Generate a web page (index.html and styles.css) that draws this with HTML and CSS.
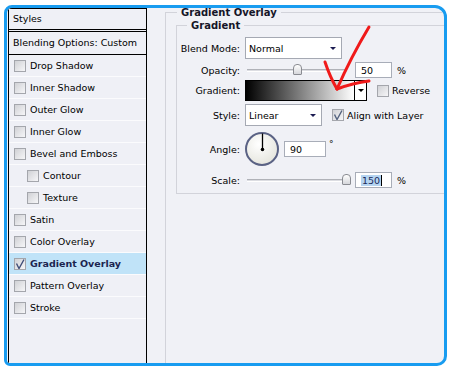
FILE: index.html
```html
<!DOCTYPE html>
<html lang="en">
<head>
  <meta charset="UTF-8">
  <meta name="viewport" content="width=device-width, initial-scale=1.0">
  <title>Layer Style</title>
  <link rel="stylesheet" href="styles.css">
</head>
<body>

  <div class="window">
    <aside class="styles-panel">
      <div class="panel-title">Styles</div>
      <div class="panel-blend">Blending Options: Custom</div>
      <ul class="style-list">
        <li><span class="check"></span>Drop Shadow</li>
        <li><span class="check"></span>Inner Shadow</li>
        <li><span class="check"></span>Outer Glow</li>
        <li><span class="check"></span>Inner Glow</li>
        <li><span class="check"></span>Bevel and Emboss</li>
        <li class="sub"><span class="check"></span>Contour</li>
        <li class="sub"><span class="check"></span>Texture</li>
        <li><span class="check"></span>Satin</li>
        <li><span class="check"></span>Color Overlay</li>
        <li class="active">
          <span class="check">
            <svg width="10" height="10" viewBox="0 0 10 10"><path d="M1.5 4.5 L4 9.5 L9 0.5" fill="none" stroke="#3f4d78" stroke-width="1.4"/></svg>
          </span>Gradient Overlay
        </li>
        <li><span class="check"></span>Pattern Overlay</li>
        <li><span class="check"></span>Stroke</li>
      </ul>
    </aside>

    <section class="options">
      <fieldset class="group outer">
        <legend>Gradient Overlay</legend>
        <fieldset class="group inner">
          <legend>Gradient</legend>

          <div class="row row-blend">
            <span class="label">Blend Mode:</span>
            <div class="select select-blend">Normal<span class="caret"></span></div>
          </div>

          <div class="row row-opacity">
            <span class="label">Opacity:</span>
            <div class="slider"><span class="thumb" style="left: calc(50% - 3px)"></span></div>
            <span class="field">50</span>
            <span class="unit">%</span>
          </div>

          <div class="row row-gradient">
            <span class="label">Gradient:</span>
            <div class="swatch">
              <span class="ramp"></span>
              <span class="swatch-drop"><span class="caret dark"></span></span>
            </div>
            <span class="check check-reverse"></span>
            <span class="check-text">Reverse</span>
          </div>

          <div class="row row-style">
            <span class="label">Style:</span>
            <div class="select select-style">Linear<span class="caret"></span></div>
            <span class="check check-align">
              <svg width="10" height="10" viewBox="0 0 10 10"><path d="M1.5 4.5 L4 9.5 L9 0.5" fill="none" stroke="#53627f" stroke-width="1.4"/></svg>
            </span>
            <span class="check-text">Align with Layer</span>
          </div>

          <div class="row row-angle">
            <span class="label">Angle:</span>
            <svg class="dial" width="34" height="34" viewBox="0 0 34 34">
              <defs>
                <radialGradient id="dialFill" cx="40%" cy="35%" r="70%">
                  <stop offset="0" stop-color="#ffffff"/>
                  <stop offset="1" stop-color="#e4e4dc"/>
                </radialGradient>
              </defs>
              <circle cx="17" cy="17" r="16" fill="url(#dialFill)" stroke="#5a6284" stroke-width="2"/>
              <line x1="17.5" y1="17" x2="17.5" y2="1.5" stroke="#000" stroke-width="1.3"/>
              <circle cx="17.5" cy="17.5" r="1.8" fill="#000"/>
            </svg>
            <span class="field field-angle">90</span>
            <span class="degree">°</span>
          </div>

          <div class="row row-scale">
            <span class="label">Scale:</span>
            <div class="slider"><span class="thumb" style="left: calc(100% - 3px)"></span></div>
            <span class="field"><span class="selected">150</span></span>
            <span class="unit">%</span>
          </div>
        </fieldset>
      </fieldset>
    </section>
  </div>

  <!-- red hand-drawn arrow pointing at the gradient picker -->
  <svg class="annotation" width="450" height="370" viewBox="0 0 450 370">
    <g fill="none" stroke="#f01a1a" stroke-width="3" stroke-linecap="round">
      <path d="M369 27 Q351 57 337 89"/>
      <path d="M325 62 Q330 77 337 89"/>
      <path d="M337 89 Q353 83 369 81"/>
    </g>
  </svg>

</body>
</html>
```

FILE: styles.css
```css
body {
  margin: 0;
  font-family: "DejaVu Sans", Tahoma, sans-serif;
  font-size: 9.5px;
  color: #000;
  background: #fff;
  overflow: hidden;
}

.window {
  display: flex;
  box-sizing: border-box;
  width: 443px;
  height: 361px;
  margin: 5px 0 0 4px;
  border: 3px solid #189cf0;
  border-radius: 8px 12px 10px 6px;
  background: #f0f1f6;
  overflow: hidden;
}

/* left list of effects */
.styles-panel {
  flex: none;
  width: 139px;
  box-sizing: border-box;
  margin-left: 1px;
  border: 1px solid #000;
  border-bottom: none;
  background: #eff0f6;
}

.panel-title {
  height: 20px;
  line-height: 20px;
  padding-left: 4px;
  border-bottom: 3px double #000;
}

.panel-blend {
  height: 22px;
  line-height: 22px;
  padding-left: 4px;
  border-bottom: 1px solid #000;
}

.style-list {
  list-style: none;
  margin: 0;
  padding: 0;
}

.style-list li {
  display: flex;
  align-items: center;
  gap: 4px;
  height: 21px;
  padding-left: 5px;
  border-bottom: 1px solid #fbfbfd;
}

.style-list li.sub {
  padding-left: 18px;
}

.style-list li.active {
  background: #c0e3f8;
  font-weight: bold;
  color: #1b2550;
}

.check {
  display: flex;
  align-items: center;
  justify-content: center;
  flex: none;
  width: 12px;
  height: 12px;
  box-sizing: border-box;
  border: 1px solid #a4a6ac;
  background: linear-gradient(135deg, #d0d1d5, #f6f6f8);
}

/* right side options */
.options {
  flex: 1;
  display: flex;
  flex-direction: column;
  min-width: 0;
  padding-left: 18px;
}

.group {
  min-width: 0;
  margin: 0;
  padding: 0 0 0 10px;
  border: 1px solid #d2d3da;
}

.group legend {
  margin-left: 1px;
  padding: 0 4px;
  line-height: 13px;
  font-size: 10px;
  font-weight: bold;
  color: #151528;
}

.outer {
  flex: 1;
  margin: -2px -12px 0 0;
  border-bottom: none;
}

.inner {
  margin-right: -12px;
  padding: 5px 0 5px 4px;
}

.inner legend {
  margin-left: 6px;
}

.row {
  display: flex;
  align-items: center;
}

.label {
  display: flex;
  justify-content: flex-end;
  flex: none;
  width: 59px;
  margin-right: 5px;
  white-space: nowrap;
}

.row-blend { height: 22px; }
.row-opacity { height: 18px; margin-top: 2px; }
.row-gradient { height: 21px; margin-top: 1px; }
.row-style { height: 22px; margin-top: 3px; }
.row-angle { height: 34px; margin-top: 6px; }
.row-scale { height: 16px; margin-top: 6px; }

.select {
  display: flex;
  align-items: center;
  justify-content: space-between;
  box-sizing: border-box;
  height: 22px;
  padding: 0 5px 0 3px;
  border: 1px solid #a5a9b3;
  background: #fff;
}

.select-blend { width: 97px; }
.select-style { width: 77px; }

.caret {
  width: 0;
  height: 0;
  border-left: 3px solid transparent;
  border-right: 3px solid transparent;
  border-top: 3px solid #1c1c52;
}

.caret.dark {
  border-top-color: #000;
}

.slider {
  position: relative;
  flex: none;
  width: 98px;
  height: 3px;
  margin: 0 10px 0 2px;
  box-sizing: border-box;
  border-top: 1px solid #b0b2b8;
  border-bottom: 1px solid #fff;
  background: #dcdde2;
}

.thumb {
  position: absolute;
  top: -6px;
  width: 9px;
  height: 11px;
  box-sizing: border-box;
  border: 1px solid #8a8c92;
  border-radius: 4px 4px 1px 1px;
  background: linear-gradient(#ffffff, #d6d7db);
}

.field {
  display: flex;
  align-items: center;
  flex: none;
  box-sizing: border-box;
  width: 37px;
  height: 16px;
  padding-left: 5px;
  border: 1px solid #a8adb8;
  background: #fff;
}

.field-angle {
  width: 42px;
  margin-left: 5px;
}

.selected {
  padding: 0 1px;
  background: #b5d4f1;
  color: #1b2b5a;
  border-right: 1px solid #000;
}

.unit {
  margin-left: 5px;
}

.degree {
  align-self: flex-start;
  margin: 7px 0 0 3px;
  font-size: 9px;
}

.swatch {
  display: flex;
  flex: none;
  box-sizing: border-box;
  width: 122px;
  height: 21px;
  border: 1px solid #000;
}

.ramp {
  flex: 1;
  background: linear-gradient(to right, #000, #fff);
}

.swatch-drop {
  display: flex;
  align-items: center;
  justify-content: center;
  width: 11px;
  border-left: 1px solid #000;
  background: #fff;
}

.check-reverse {
  margin-left: 10px;
}

.check-align {
  margin-left: 10px;
}

.check-text {
  margin-left: 3px;
}

.annotation {
  position: absolute;
  top: 0;
  left: 0;
  pointer-events: none;
}
```
